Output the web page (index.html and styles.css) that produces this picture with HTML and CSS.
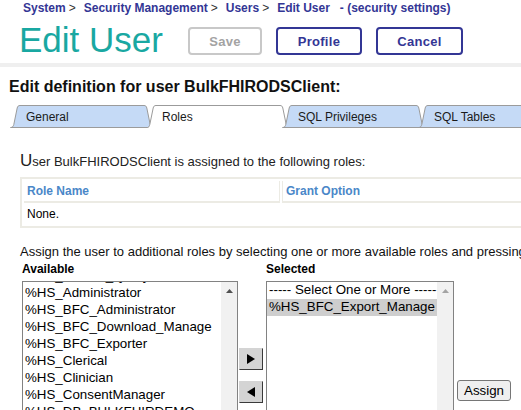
FILE: index.html
```html
<!DOCTYPE html>
<html lang="en">
<head>
    <meta charset="UTF-8">
    <meta name="viewport" content="width=device-width, initial-scale=1.0">
    <title>Edit User</title>
    <link rel="stylesheet" href="styles.css">
</head>
<body>
    <!-- Page header -->
    <div class="page-header">
        <div class="breadcrumb">
            <span class="crumb">System</span><span class="sep">&gt;</span><span class="crumb">Security Management</span><span class="sep">&gt;</span><span class="crumb">Users</span><span class="sep">&gt;</span><span class="crumb">Edit User</span><span class="crumb-note">- (security settings)</span>
        </div>
        <div class="title-row">
            <h1 class="title">Edit User</h1>
            <button class="cmd cmd-save" disabled>Save</button>
            <button class="cmd cmd-profile">Profile</button>
            <button class="cmd cmd-cancel">Cancel</button>
        </div>
    </div>

    <h2 class="def-title">Edit definition for user BulkFHIRODSClient:</h2>

    <!-- Tabs -->
    <div class="tabs">
        <div class="tab">
            <svg class="tab-shape" width="144" height="23" viewBox="0 0 144 23"><path d="M0.5 22.5 C2.5 22.5 3.3 21.3 3.8 19.5 L7.2 3 C7.6 1.3 8.3 0.5 10 0.5 L134 0.5 C135.7 0.5 136.4 1.3 136.8 3 L140.2 19.5 C140.7 21.3 141.5 22.5 143.5 22.5 Z"/></svg>
            <span class="tab-label">General</span>
        </div>
        <div class="tab tab-active">
            <svg class="tab-shape" width="144" height="23" viewBox="0 0 144 23"><path d="M0.5 23 C2.5 23 3.3 21.3 3.8 19.5 L7.2 3 C7.6 1.3 8.3 0.5 10 0.5 L134 0.5 C135.7 0.5 136.4 1.3 136.8 3 L140.2 19.5 C140.7 21.3 141.5 23 143.5 23"/></svg>
            <span class="tab-label">Roles</span>
        </div>
        <div class="tab">
            <svg class="tab-shape" width="144" height="23" viewBox="0 0 144 23"><path d="M0.5 22.5 C2.5 22.5 3.3 21.3 3.8 19.5 L7.2 3 C7.6 1.3 8.3 0.5 10 0.5 L134 0.5 C135.7 0.5 136.4 1.3 136.8 3 L140.2 19.5 C140.7 21.3 141.5 22.5 143.5 22.5 Z"/></svg>
            <span class="tab-label">SQL Privileges</span>
        </div>
        <div class="tab">
            <svg class="tab-shape" width="144" height="23" viewBox="0 0 144 23"><path d="M0.5 22.5 C2.5 22.5 3.3 21.3 3.8 19.5 L7.2 3 C7.6 1.3 8.3 0.5 10 0.5 L134 0.5 C135.7 0.5 136.4 1.3 136.8 3 L140.2 19.5 C140.7 21.3 141.5 22.5 143.5 22.5 Z"/></svg>
            <span class="tab-label">SQL Tables</span>
        </div>
    </div>

    <!-- Roles tab -->
    <div class="tab-panel">
        <p class="assigned"><span class="big-u">U</span>ser BulkFHIRODSClient is assigned to the following roles:</p>

        <table class="roles-table">
            <tr>
                <th class="col-name">Role Name</th>
                <th class="col-grant">Grant Option</th>
            </tr>
            <tr>
                <td colspan="2">None.</td>
            </tr>
        </table>

        <p class="assign-intro">Assign the user to additional roles by selecting one or more available roles and pressing [Assign].</p>

        <div class="picker">
            <div class="pick-col">
                <label class="pick-label">Available</label>
                <div class="listbox listbox-avail">
                    <div class="options">
                        <div class="option option-cut">%HS_Access_Query</div>
                        <div class="option">%HS_Administrator</div>
                        <div class="option">%HS_BFC_Administrator</div>
                        <div class="option">%HS_BFC_Download_Manage</div>
                        <div class="option">%HS_BFC_Exporter</div>
                        <div class="option">%HS_Clerical</div>
                        <div class="option">%HS_Clinician</div>
                        <div class="option">%HS_ConsentManager</div>
                        <div class="option">%HS_DB_BULKFHIRDEMO</div>
                        <div class="option">%HS_DB_HSCUSTOM</div>
                    </div>
                    <div class="scrollbar">
                        <svg width="7" height="4" viewBox="0 0 7 4"><polygon points="3.5,0 7,4 0,4" fill="#505050"/></svg>
                    </div>
                </div>
            </div>

            <div class="movers">
                <button class="mover"><svg width="8" height="10" viewBox="0 0 8 10"><polygon points="0,0 8,5 0,10" fill="#000"/></svg></button>
                <button class="mover"><svg width="8" height="10" viewBox="0 0 8 10"><polygon points="8,0 0,5 8,10" fill="#000"/></svg></button>
            </div>

            <div class="pick-col">
                <label class="pick-label">Selected</label>
                <div class="listbox listbox-sel">
                    <div class="options">
                        <div class="option">----- Select One or More -----</div>
                        <div class="option option-chosen">%HS_BFC_Export_Manage</div>
                    </div>
                    <div class="scrollbar">
                        <svg width="7" height="4" viewBox="0 0 7 4"><polygon points="3.5,0 7,4 0,4" fill="#a3a3a3"/></svg>
                    </div>
                </div>
            </div>

            <button class="assign-btn">Assign</button>
        </div>
    </div>
</body>
</html>
```

FILE: styles.css
```css
/* General */
* {
    box-sizing: border-box;
    margin: 0;
    padding: 0;
}

html, body {
    overflow: hidden;
}

body {
    font-family: "Liberation Sans", Arial, sans-serif;
    background-color: #ffffff;
    color: #000000;
}

/* Header */
.page-header {
    height: 67px;
    border-bottom: 4px solid #efefef;
}

.breadcrumb {
    padding: 1px 0 0 23px;
    font-size: 12px;
    line-height: 14px;
    font-weight: bold;
    color: #333695;
    white-space: nowrap;
}

.sep {
    font-weight: normal;
    color: #333333;
    padding: 0 8px 0 3px;
}

.crumb-note {
    margin-left: 10px;
}

.title-row {
    display: flex;
    align-items: flex-start;
    padding-left: 19px;
}

.title {
    margin: 7px 25px 0 0;
    font-size: 35px;
    line-height: 35px;
    font-weight: normal;
    color: #19a8a2;
}

.cmd {
    margin: 12px 14px 0 0;
    height: 28px;
    border: 2px solid #333695;
    border-radius: 4px;
    background-color: #ffffff;
    color: #333695;
    font-family: "Liberation Sans", Arial, sans-serif;
    font-size: 13px;
    font-weight: bold;
    letter-spacing: 0.3px;
}

.cmd-save {
    width: 74px;
    border-color: #c8c8c8;
    color: #a3a3a3;
}

.cmd-profile {
    width: 86px;
}

.cmd-cancel {
    width: 87px;
}

/* Definition title */
.def-title {
    margin: 10px 0 0 9px;
    font-size: 16px;
    line-height: 19px;
    color: #111111;
}

/* Tabs */
.tabs {
    display: flex;
    margin-top: 9px;
    padding-left: 10px;
}

.tab {
    display: grid;
    flex: none;
    width: 144px;
    height: 23px;
}

.tab + .tab {
    margin-left: -8px;
}

.tab > * {
    grid-area: 1 / 1;
}

.tab-shape path {
    fill: #c5daf6;
    stroke: #9b9b9b;
    stroke-width: 1;
}

.tab-active .tab-shape path {
    fill: #ffffff;
}

.tab-label {
    padding: 2px 0 0 16px;
    font-size: 12px;
    line-height: 21px;
    color: #1a1a1a;
    white-space: nowrap;
}

/* Roles panel */
.tab-panel {
    padding-left: 20px;
}

.assigned {
    margin-top: 24px;
    font-size: 13px;
    line-height: 20px;
    color: #222222;
    white-space: nowrap;
}

.big-u {
    font-size: 17px;
    line-height: 1;
}

.roles-table {
    margin-top: 5px;
    width: 600px;
    border: 2px solid #ecebe4;
    border-spacing: 2px;
    font-size: 12px;
}

.roles-table th {
    padding: 3px;
    line-height: 14px;
    text-align: left;
    color: #4a87c8;
    border-bottom: 2px solid #ecebe4;
}

.roles-table .col-name {
    width: 256px;
    border-right: 1px solid #ecebe4;
}

.roles-table .col-grant {
    border-left: 1px solid #ecebe4;
}

.roles-table td {
    padding: 2px 3px 3px;
    line-height: 14px;
}

.assign-intro {
    margin-top: 16px;
    font-size: 13px;
    line-height: 16px;
    color: #111111;
    white-space: nowrap;
}

/* Role picker */
.picker {
    display: flex;
    align-items: flex-start;
    margin: 2px 0 0 2px;
}

.pick-label {
    display: block;
    margin-bottom: 5px;
    font-size: 12px;
    line-height: 14px;
    font-weight: bold;
}

.listbox {
    display: flex;
    height: 150px;
    border: 1px solid #828282;
    overflow: hidden;
    font-size: 13.33px;
}

.listbox-avail {
    width: 216px;
}

.listbox-sel {
    width: 188px;
}

.options {
    flex: 1;
    overflow: hidden;
}

.option {
    height: 17px;
    padding: 0 2px 2px;
    line-height: 15px;
    white-space: nowrap;
    overflow: hidden;
}

.option-cut {
    margin-top: -14px;
}

.option-chosen {
    background-color: #cecece;
}

.scrollbar {
    display: flex;
    justify-content: center;
    align-items: flex-start;
    width: 16px;
    padding-top: 7px;
    background-color: #f1f1f1;
}

.movers {
    display: flex;
    flex-direction: column;
    gap: 11px;
    width: 28px;
    margin-top: 86px;
    padding-left: 1px;
}

.mover {
    display: flex;
    align-items: center;
    justify-content: center;
    width: 24px;
    height: 22px;
    border: 1px solid;
    border-color: #d4d4d4 #3a3a3a #3a3a3a #d4d4d4;
    background-color: #d4d4d4;
}

.assign-btn {
    margin: 118px 0 0 3px;
    height: 21px;
    padding: 0 6px;
    border: 1px solid #767676;
    border-radius: 3px;
    background-color: #efefef;
    font-family: "Liberation Sans", Arial, sans-serif;
    font-size: 13.33px;
    color: #000000;
}
```
